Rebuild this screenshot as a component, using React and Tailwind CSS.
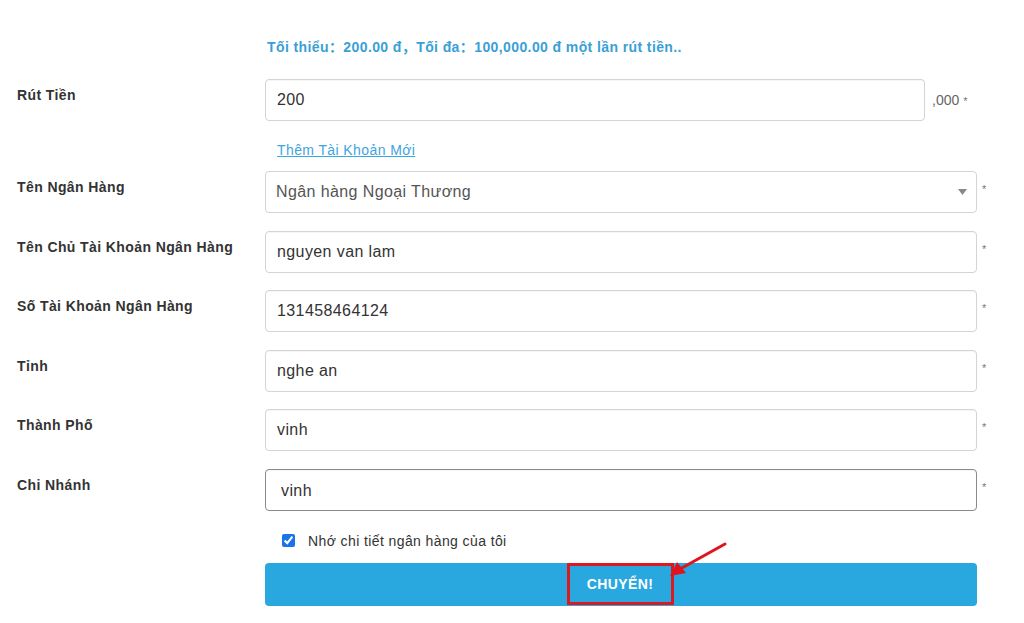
import { useState } from 'react';

const font = { fontFamily: '"Liberation Sans", Arial, "Noto Sans CJK SC", sans-serif' };

const fields = [
  { label: 'Tên Chủ Tài Khoản Ngân Hàng', value: 'nguyen van lam' },
  { label: 'Số Tài Khoản Ngân Hàng', value: '131458464124' },
  { label: 'Tỉnh', value: 'nghe an' },
  { label: 'Thành Phố', value: 'vinh' },
];

const inputCls =
  'h-[42px] w-[712px] rounded-[4px] border border-[#d4d4d4] bg-white pl-[11px] text-[16px] tracking-[0.4px] text-[#333] shadow-[inset_0_1px_1px_rgba(0,0,0,0.04)] outline-none';

const Row = ({ label, children, className = 'mt-[17.5px]' }) => (
  <div className={`flex ${className}`}>
    <div className="w-[248px] pt-[6px] text-[14px] font-bold leading-[20px] text-[#333]">{label}</div>
    <div className="flex items-start">{children}</div>
  </div>
);

const Star = () => <span className="ml-[5px] pt-[11px] text-[11px] leading-[14px] text-[#777]">*</span>;

export default function App() {
  const [form, setForm] = useState({
    amount: '200',
    branch: 'vinh',
  });
  const [remember, setRemember] = useState(true);

  return (
    <div className="relative min-h-[623px] w-[1024px] bg-white pl-[17px] tracking-[0.4px]" style={font}>
      <p className="pl-[250px] pt-[38px] text-[14px] font-bold leading-[18px] text-[#3a9fd6]">
        Tối thiểu：200.00 đ，Tối đa：100,000.00 đ một lần rút tiền..
      </p>

      <Row label="Rút Tiền" className="mt-[23px]">
        <input
          value={form.amount}
          onChange={(e) => setForm((p) => ({ ...p, amount: e.target.value }))}
          className={`${inputCls} !w-[660px]`}
        />
        <span className="ml-[7px] pt-[12px] text-[14px] leading-[18px] tracking-normal text-[#666]">
          ,000 <span className="text-[11px] text-[#777]">*</span>
        </span>
      </Row>

      <div className="mt-[19px] pl-[260px] text-[14px] leading-[20px]">
        <a href="#" className="text-[#3ea5de] underline">Thêm Tài Khoản Mới</a>
      </div>

      <Row label="Tên Ngân Hàng" className="mt-[11px]">
        <div className="relative flex h-[42px] w-[712px] items-center rounded-[4px] border border-[#d4d4d4] bg-white pl-[10px] text-[16px] text-[#555]">
          Ngân hàng Ngoại Thương
          <svg className="absolute right-[9px] top-[17px]" width="9" height="6" viewBox="0 0 9 6">
            <path d="M0 0 L9 0 L4.5 6 Z" fill="#888" />
          </svg>
        </div>
        <Star />
      </Row>

      {fields.map((f) => (
        <Row key={f.label} label={f.label}>
          <input defaultValue={f.value} className={inputCls} />
          <Star />
        </Row>
      ))}

      <Row label="Chi Nhánh">
        <input
          value={form.branch}
          onChange={(e) => setForm((p) => ({ ...p, branch: e.target.value }))}
          className={`${inputCls} !border-[#8a8a8a] pl-[15px] pt-[2px]`}
        />
        <Star />
      </Row>

      <label className="mt-[20px] flex items-center pl-[265px] text-[14px] leading-[20px] text-[#333]">
        <input
          type="checkbox"
          checked={remember}
          onChange={(e) => setRemember(e.target.checked)}
          className="h-[13px] w-[13px] accent-[#1a73e8]"
        />
        <span className="ml-[13px]">Nhớ chi tiết ngân hàng của tôi</span>
      </label>

      <div className="mt-[12px] pl-[248px]">
        <button className="flex h-[43px] w-[712px] items-center justify-center rounded-[4px] bg-[#29a7df] tracking-[0.4px]">
          <span className="ml-[-2px] flex h-[42px] w-[107px] items-center justify-center border-[3px] border-[#dc1820] text-[14px] font-bold text-white">
            CHUYỂN!
          </span>
        </button>
      </div>

      <svg className="absolute left-[660px] top-[538px]" width="75" height="45" viewBox="0 0 75 45">
        <line x1="65" y1="6" x2="20" y2="31" stroke="#e0141c" strokeWidth="3" strokeLinecap="round" />
        <path d="M10 38 L17 24 L26 35 Z" fill="#e0141c" />
      </svg>
    </div>
  );
}
